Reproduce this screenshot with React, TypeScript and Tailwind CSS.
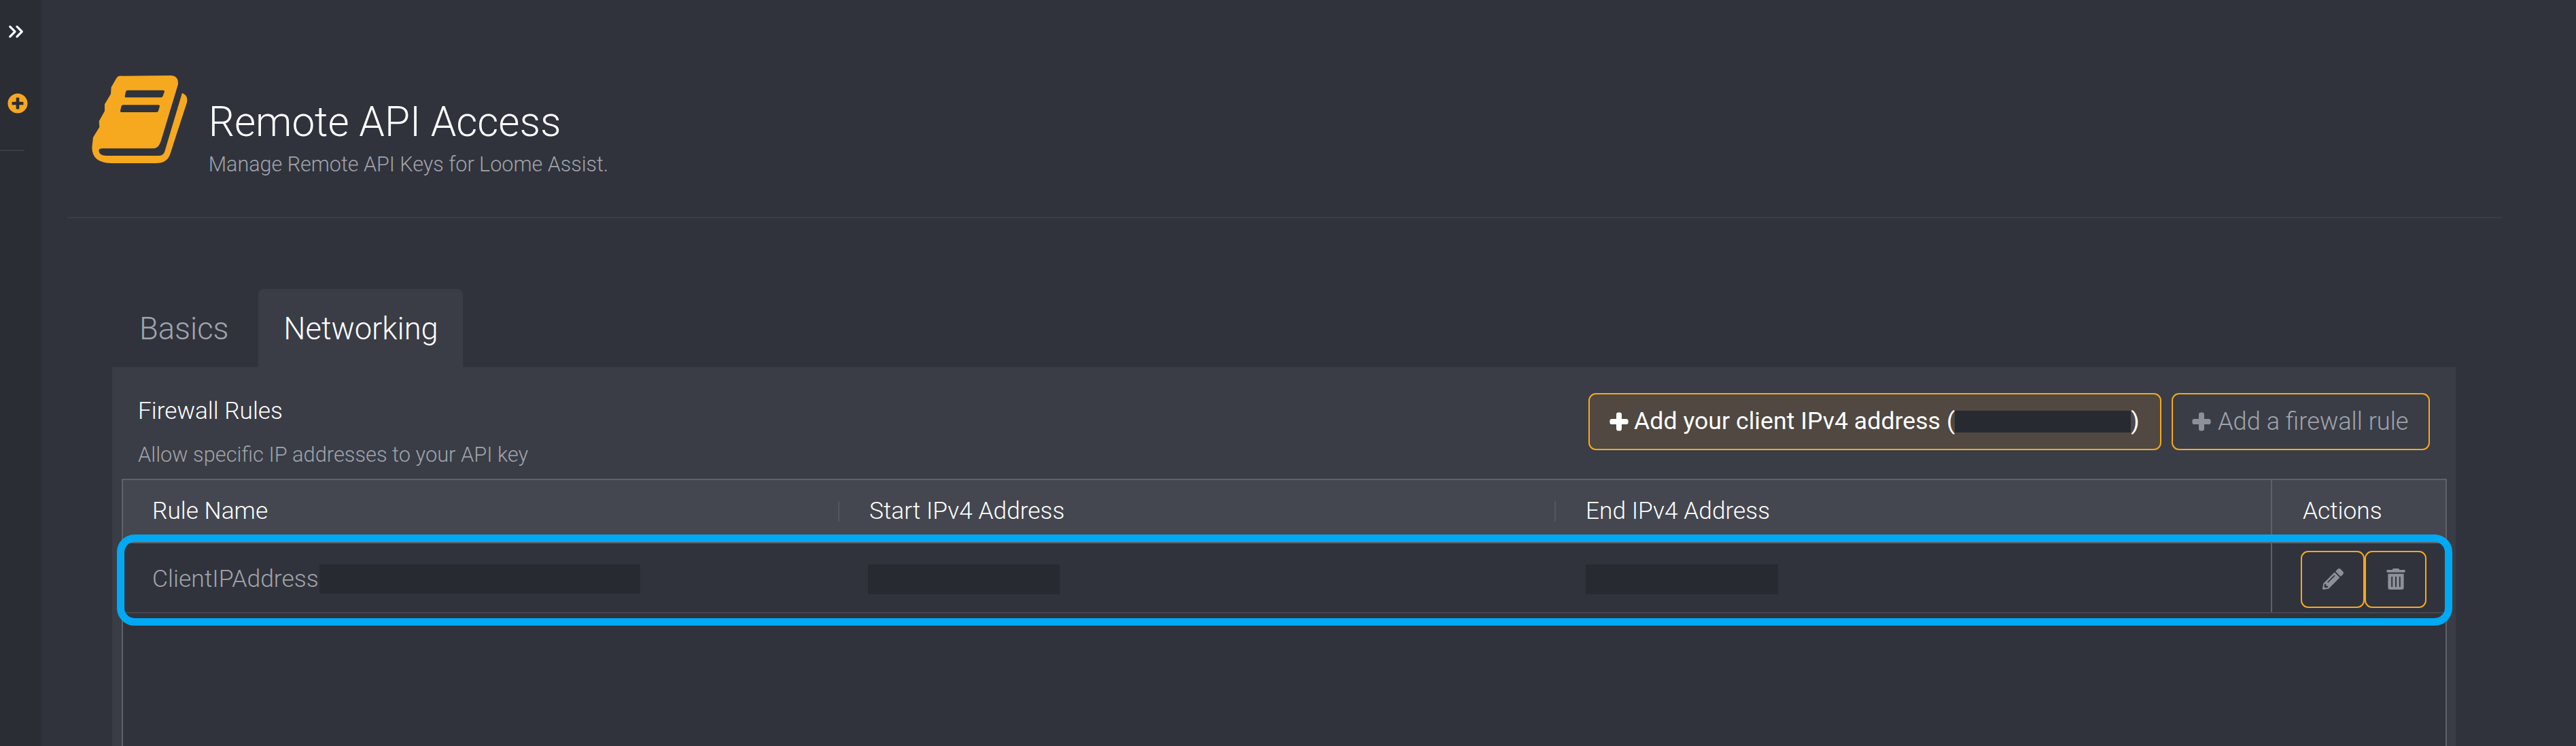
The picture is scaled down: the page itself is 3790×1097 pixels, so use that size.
import { ChevronsRight } from "lucide-react";
import { FaPencilAlt, FaPlus, FaPlusCircle, FaTrashAlt } from "react-icons/fa";

function BookIcon() {
  return (
    <svg viewBox="400 330 440 395" className="h-[131.67px] w-[146.67px] shrink-0" fill="#f6a81f">
      <path
        fillRule="evenodd"
        d="M515 345Q522 333 540 335L755 333Q790 335 787 372L712 620Q702 655 675 655L455 655Q437 655 437 665Q440 687 470 687L700 687Q722 687 728 668L805 410Q832 420 826 452L752 680Q738 720 690 720L490 720Q408 718 407 650L412 606L440 560L438 535L463 490L463 460L490 415L492 385ZM565 398Q558 398 556 405L552 424Q551 430 558 430L712 430Q718 430 720 424L727 404Q728 398 720 398ZM545 463Q538 463 536 470L532 489Q531 495 538 495L692 495Q698 495 700 489L706 469Q707 463 700 463Z"
      />
    </svg>
  );
}

function HeaderCell({ label, first }: { label: string; first?: boolean }) {
  return (
    <div className="flex items-center">
      {!first && <div className="mr-[44px] h-[30px] w-[2px] bg-[#54565e]" />}
      <span className={first ? "ml-[43px]" : ""}>{label}</span>
    </div>
  );
}

export default function App() {
  return (
    <div className="flex h-[1097px] w-[3790px] overflow-hidden bg-[#30333c] font-['Roboto',sans-serif]">
      <aside className="flex w-[61px] shrink-0 flex-col bg-[#2b2d35]">
        <ChevronsRight className="ml-[6px] mt-[29px] h-[35px] w-[35px] text-white" strokeWidth={2.2} />
        <FaPlusCircle className="ml-[11px] mt-[73px] h-[30px] w-[30px] text-[#f6a81f]" />
        <div className="mt-[53px] h-[2px] w-[36px] bg-[#3a3c46]" />
      </aside>

      <main className="min-w-0 flex-1">
        <div className="ml-[38px] mr-[109px] h-[321px] border-b-2 border-[#3a3c46]">
          <div className="flex pl-[34px] pt-[110px]">
            <BookIcon />
            <div className="ml-[27px] pt-[35px] font-light">
              <h1 className="text-[60.2px] leading-[70px] text-white">Remote API Access</h1>
              <p className="mt-[9px] text-[30.5px] leading-[36px] text-[#a0a4ab]">Manage Remote API Keys for Loome Assist.</p>
            </div>
          </div>
        </div>

        <div className="ml-[104px] mt-[104px] flex h-[115px] w-[577px] text-[45.3px] font-light">
          <div className="flex w-[215px] items-center pl-[40px] pt-[2px] text-[#a0a4ab]">Basics</div>
          <div className="flex w-[301px] items-center justify-center rounded-t-[8px] bg-[#3a3d46] pl-[1px] pt-[2px] text-white">Networking</div>
        </div>

        <section className="ml-[104px] flex h-[557px] w-[3448px] flex-col bg-[#3a3d46] pl-[14px] pr-[13px]">
          <div className="flex h-[164px] justify-between pl-[24px] pr-[25px]">
            <div className="font-light">
              <div className="pt-[43px] text-[35.2px] leading-[42px] text-white">Firewall Rules</div>
              <div className="mt-[26px] text-[30.8px] leading-[36px] text-[#a0a4ab]">Allow specific IP addresses to your API key</div>
            </div>
            <div className="flex gap-[15px] pt-[38px] text-[36px]">
              <button className="flex h-[84px] w-[843px] items-center rounded-[11px] border-2 border-[#f6a81f] bg-[#504841] pl-[29px] text-[35.7px] text-white">
                <FaPlus className="mr-[8px] h-[28px] w-[28px]" stroke="currentColor" strokeWidth={50} />
                <span>Add your client IPv4 address (</span>
                <span className="h-[32px] w-[259px] bg-[#282a32]" />
                <span>)</span>
              </button>
              <button className="flex h-[84px] w-[380px] items-center rounded-[11px] border-2 border-[#f6a81f] pl-[28px] text-[36.2px] text-[#a0a4ab]">
                <FaPlus className="mr-[10px] h-[28px] w-[28px] text-[#8c9099]" stroke="currentColor" strokeWidth={50} />
                <span className="font-light">Add a firewall rule</span>
              </button>
            </div>
          </div>

          <div className="relative flex-1 border-x-2 border-t-2 border-[#5f6168] bg-[#30333c]">
            <div className="grid h-[91px] grid-cols-[1052px_1054px_1054px_1fr] bg-[#44474f] text-[35.3px] font-light text-white">
              <HeaderCell label="Rule Name" first />
              <HeaderCell label="Start IPv4 Address" />
              <HeaderCell label="End IPv4 Address" />
              <div className="flex items-center border-l-2 border-[#5f6168] pl-[45px]">Actions</div>
            </div>
            <div className="grid h-[105px] grid-cols-[1052px_1054px_1054px_1fr] border-y-2 border-b-[#44464d] border-t-[#5f6168] pt-[4px] text-[35.5px] font-light text-[#a0a4ab]">
              <div className="flex items-center pl-[43px]">
                <span>ClientIPAddress</span>
                <span className="ml-[1px] h-[43px] w-[472px] bg-[#282a32]" />
              </div>
              <div className="flex items-center pl-[44px]">
                <span className="h-[44px] w-[282px] bg-[#282a32]" />
              </div>
              <div className="flex items-center pl-[46px]">
                <span className="h-[44px] w-[283px] bg-[#282a32]" />
              </div>
              <div className="mt-[-4px] flex items-center border-l-2 border-[#5f6168] pl-[42px] pt-[4px]">
                <button className="flex h-[84px] w-[94px] items-center justify-center rounded-[11px] border-2 border-[#f6a81f]">
                  <FaPencilAlt className="h-[31px] w-[31px] text-[#8c9099]" />
                </button>
                <button className="flex h-[84px] w-[91px] items-center justify-center rounded-[11px] border-2 border-[#f6a81f]">
                  <FaTrashAlt className="h-[31px] w-[28px] text-[#8c9099]" />
                </button>
              </div>
            </div>
            <div className="absolute left-[-9px] right-[-10px] top-[80px] h-[134px] rounded-[26px] border-[11px] border-[#00a9f4]" />
          </div>
        </section>
      </main>
    </div>
  );
}
